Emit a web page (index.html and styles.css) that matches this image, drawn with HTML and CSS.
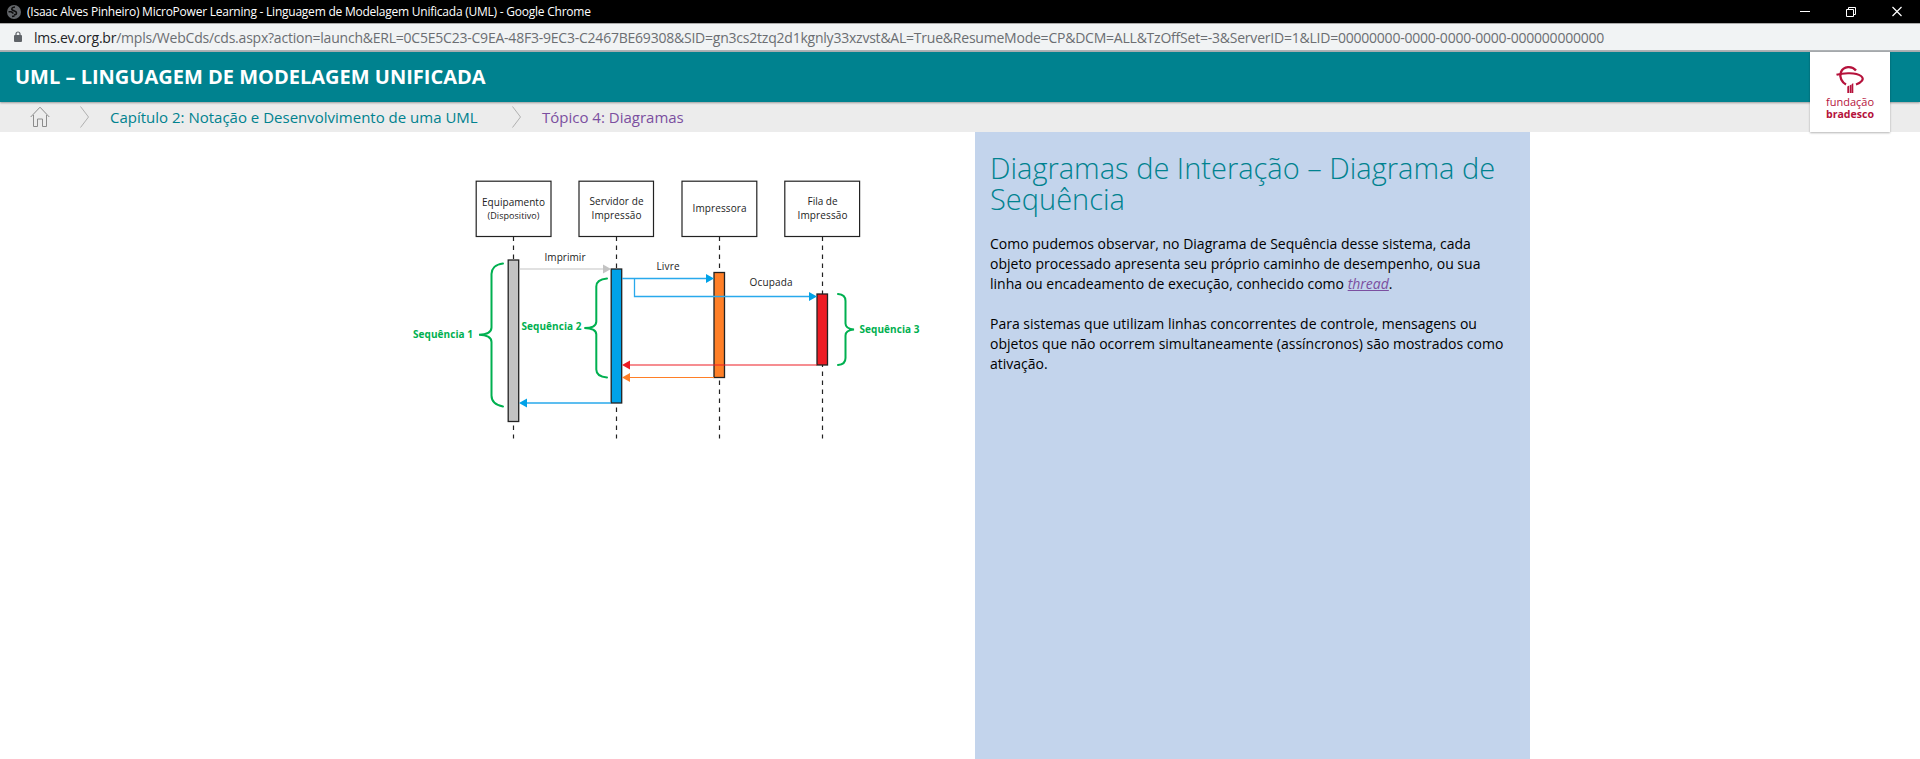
FILE: index.html
```html
<!DOCTYPE html>
<html lang="pt-BR">
<head>
<meta charset="utf-8">
<title>MicroPower Learning - Linguagem de Modelagem Unificada (UML)</title>
<link rel="stylesheet" href="styles.css">
</head>
<body>
<div class="titlebar">
  <svg class="globe" width="14" height="14" viewBox="0 0 14 14"><circle cx="7" cy="7" r="7" fill="#63666a"/><path d="M8 2C5 2 4 4 5.500 5.200S9.500 6 9.500 8 8 9.800 7 9.500M1.500 6.800h2.500c1 0 1.200 1.200 2.500 1.400M5 11.500l2.500-.5" fill="none" stroke="#0c0c0c" stroke-width="1.600"/></svg>
  <span class="window-title">(Isaac Alves Pinheiro) MicroPower Learning - Linguagem de Modelagem Unificada (UML) - Google Chrome</span>
  <svg class="controls" width="104" height="12" viewBox="0 0 104 12" fill="none" stroke="#fff"><path d="M0 5.500h10"/><path d="M46.500 3.500h7v7h-7zM48.500 3.500v-2h7v7h-2"/><path d="M92.500 1l9 9M101.500 1l-9 9" stroke-width="1.200"/></svg>
</div>
<div class="address">
  <svg class="lock" width="8" height="12" viewBox="0 0 8 12"><path d="M2 5V3a2 2 0 0 1 4 0v2" fill="none" stroke="#5f6368" stroke-width="1.200"/><rect y="4" width="8" height="7" rx="1" fill="#5f6368"/></svg>
  <span class="url"><span class="host">lms.ev.org.br</span>/mpls/WebCds/cds.aspx?action=launch&amp;ERL=0C5E5C23-C9EA-48F3-9EC3-C2467BE69308&amp;SID=gn3cs2tzq2d1kgnly33xzvst&amp;AL=True&amp;ResumeMode=CP&amp;DCM=ALL&amp;TzOffSet=-3&amp;ServerID=1&amp;LID=00000000-0000-0000-0000-000000000000</span>
</div>
<header class="course">
  <h1>UML – LINGUAGEM DE MODELAGEM UNIFICADA</h1>
  <div class="logo">
    <svg width="80" height="80" viewBox="0 0 80 80">
      <g fill="none" stroke="#b5123b"><path d="M46 18.500C42 13.500 33.500 14 31 20c-2 5.500 1 10.500 5 12.500" stroke-width="2.300"/><path d="M26.500 22.800C34 20.500 46 20.500 51 24c4 3 .5 6.500-5 8.500" stroke-width="2.100"/></g>
      <path d="M37.300 34.500l1.800-1v7.500h-1.800zM39.700 33.500l2-1.300v8.800h-2zM42 31.800l1.300-.6v9.800h-1.300z" fill="#b5123b"/>
      <text class="logo-light" x="16" y="54" textLength="48" lengthAdjust="spacingAndGlyphs">fundação</text>
      <text class="logo-bold" x="16" y="65.500" textLength="48" lengthAdjust="spacingAndGlyphs">bradesco</text>
    </svg>
  </div>
</header>
<nav class="crumbs">
  <svg class="home" width="20" height="22" viewBox="0 0 20 22" fill="none" stroke="#8c8c8c"><path d="M.7 11L10 1.200 19.300 11M3.500 9v11.500h4V13h5v7.500h4V9"/></svg>
  <svg class="chevron" width="10" height="22" viewBox="0 0 10 22" fill="none" stroke="#b0b0b0"><path d="M.5.500L8.500 11l-8 10.500"/></svg>
  <a class="chapter">Capítulo 2: Notação e Desenvolvimento de uma UML</a>
  <svg class="chevron" width="10" height="22" viewBox="0 0 10 22" fill="none" stroke="#b0b0b0"><path d="M.5.500L8.500 11l-8 10.500"/></svg>
  <a class="topic">Tópico 4: Diagramas</a>
</nav>
<main class="content">
  <svg class="diagram" width="975" height="627" viewBox="0 131.500 975 627">
    <g class="lifelines"><path d="M513.500 236v202M616.500 236v202M719.500 236v202M822.500 236v202"/></g>
    <g class="actors"><rect x="476.200" y="180.700" width="74.800" height="55.300"/><rect x="579" y="180.700" width="74.500" height="55.300"/><rect x="682" y="180.700" width="74.800" height="55.300"/><rect x="784.800" y="180.700" width="74.800" height="55.300"/></g>
    <g class="label">
      <text x="513.500" y="205" textLength="63">Equipamento</text><text class="small" x="513.500" y="218.500" textLength="52">(Dispositivo)</text>
      <text x="616.500" y="204.500" textLength="54">Servidor de</text><text x="616.500" y="218" textLength="50">Impressão</text>
      <text x="719.500" y="211.500" textLength="54">Impressora</text>
      <text x="822.500" y="204.500" textLength="30">Fila de</text><text x="822.500" y="218" textLength="50">Impressão</text>
      <text x="565" y="260" textLength="41">Imprimir</text><text x="668" y="269.500" textLength="23">Livre</text><text x="771" y="285.500" textLength="43">Ocupada</text>
    </g>
    <g class="bars"><rect x="508.200" y="259.500" width="10.500" height="161.500" fill="#c3c3c3"/><rect x="611.200" y="268.500" width="10.500" height="134" fill="#00a2e8"/><rect x="714" y="272" width="10.500" height="105" fill="#ff7f27"/><rect x="817" y="293.500" width="10.500" height="71" fill="#ed1c24"/></g>
    <g fill="none">
      <path d="M519.500 268.500H604" stroke="#c3c3c3"/>
      <path d="M622 278H707M634.500 278v18H810M526 402.500h85" stroke="#29a9ec" stroke-width="1.300"/>
      <path d="M629 364.500h188" stroke="#ed1c24" stroke-width="1.200"/><path d="M629 377h85" stroke="#ff7f27" stroke-width="1.200"/>
    </g>
    <path d="M603 264v9l8-4.500z" fill="#c3c3c3"/>
    <path d="M706 273.500v9l8-4.500zM809 291.500v9l8-4.500zM527 398v9l-8-4.500z" fill="#00a2e8"/>
    <path d="M630 360v9l-8-4.500z" fill="#ed1c24"/><path d="M630 372.500v9l-8-4.500z" fill="#ff7f27"/>
    <g class="braces">
      <path d="M503 263c-8 1-11.500 5.500-11.500 10.500V327c0 5-4 7-12.500 7.300 8.500.3 12.500 2.200 12.500 7.200V395c0 5 3.500 9.500 11.500 11"/>
      <path d="M607 278c-8 .7-10.700 4-10.700 8v35c0 4-3.500 6.500-12 6.500 8.500.2 12 2.500 12 6.500v35c0 4 2.700 7.300 10.700 8"/>
      <path d="M838 293.500c5.500.3 7.500 3 7.500 7V323c0 4 3 5.500 8.500 6-5.500.5-8.500 2-8.500 6v22.500c0 4-2 6.700-7.500 7"/>
    </g>
    <g class="sequence"><text x="413" y="337.500" textLength="60">Sequência 1</text><text x="521.500" y="329" textLength="60">Sequência 2</text><text x="859.500" y="332" textLength="60">Sequência 3</text></g>
  </svg>
  <article class="panel">
    <h2>Diagramas de Interação – Diagrama de Sequência</h2>
    <p>Como pudemos observar, no Diagrama de Sequência desse sistema, cada<br>objeto processado apresenta seu próprio caminho de desempenho, ou sua<br>linha ou encadeamento de execução, conhecido como <a class="term">thread</a>.</p>
    <p>Para sistemas que utilizam linhas concorrentes de controle, mensagens ou<br>objetos que não ocorrem simultaneamente (assíncronos) são mostrados como<br>ativação.</p>
  </article>
</main>
</body>
</html>
```
FILE: styles.css
```css
* { box-sizing: border-box; }
body { margin: 0; height: 759px; overflow: hidden; background: #fff; font-family: "Open Sans", "Noto Sans", sans-serif; white-space: nowrap; }
svg { display: block; flex: none; }
.titlebar { display: flex; align-items: center; height: 23px; background: #000; color: #fff; padding: 0 16px 0 7px; font: 12px/23px "Open Sans", sans-serif; }
.window-title { margin-left: 6px; letter-spacing: -0.235px; }
.controls { margin-left: auto; }
.address { display: flex; align-items: center; height: 29px; padding-left: 14px; background: #f1f3f4; border-top: 1px solid #aaa; border-bottom: 2px solid #adb1b4; color: #6b6e72; font-size: 14px; }
.url { margin-left: 12px; letter-spacing: -0.223px; }
.host { color: #222427; }
.course { display: flex; justify-content: space-between; height: 50px; padding: 0 30px 0 15px; background: #00828f; box-shadow: 0 1px 2px rgba(0,0,0,.35); position: relative; }
.course h1 { margin: 0; color: #fff; font-size: 20px; font-weight: 700; line-height: 50px; }
.logo { width: 80px; height: 80px; background: #fff; box-shadow: 0 1px 2px rgba(0,0,0,.3); }
.logo text { fill: #b5123b; }
.logo .logo-light { font-size: 10.5px; }
.logo .logo-bold { font-size: 10.5px; font-weight: 700; }
.crumbs { display: flex; align-items: center; height: 30px; padding-left: 30px; background: #ececec; font-size: 15px; }
.home { margin-right: 30px; }
.chapter { width: 422px; padding-left: 20px; color: #00828f; }
.topic { padding-left: 20px; color: #7b4fa0; }
.content { display: flex; height: 627px; }
.panel { width: 555px; padding: 20px 15px; background: #c3d4ec; color: #000; white-space: normal; font-size: 14px; line-height: 20px; }
.panel h2 { margin: 0 0 20px; color: #00828f; font-size: 29px; font-weight: 300; line-height: 31px; }
.panel p { margin: 0 0 20px; white-space: nowrap; }
.term { color: #7b4fa0; font-style: italic; text-decoration: underline; }
.lifelines { stroke: #222; stroke-width: 1.2; stroke-dasharray: 4.500 4.500; }
.actors rect { fill: #fff; stroke: #222; stroke-width: 1.200; }
.bars rect { stroke: #222; stroke-width: 1.300; }
.label { fill: #222; font-size: 10px; text-anchor: middle; }
.label .small { font-size: 9px; }
.braces { fill: none; stroke: #00b050; stroke-width: 2; stroke-linecap: round; }
.sequence { fill: #00b050; font-size: 10px; font-weight: 700; }
```
